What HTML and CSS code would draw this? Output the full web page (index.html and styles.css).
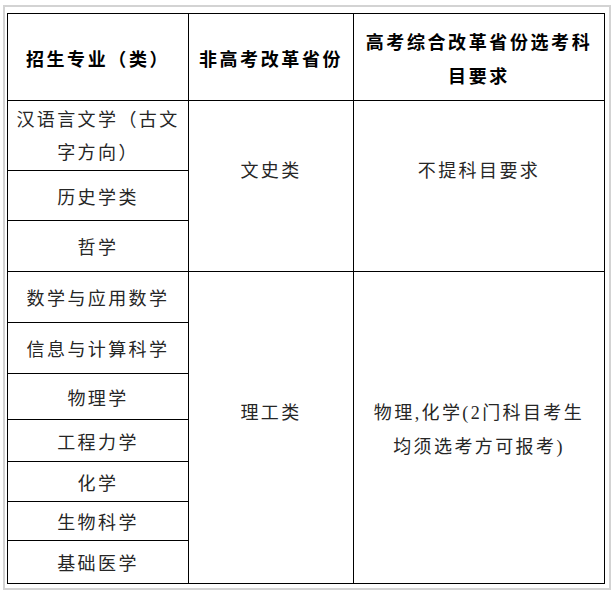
FILE: index.html
```html
<!DOCTYPE html>
<html lang="zh-CN">
<head>
<meta charset="utf-8">
<title>招生专业选考科目要求</title>
<link rel="stylesheet" href="styles.css">
</head>
<body>
<div class="frame">
  <table class="req-table">
    <colgroup>
      <col class="c1">
      <col class="c2">
      <col class="c3">
    </colgroup>
    <tr class="h87">
      <th>招生专业（类）</th>
      <th>非高考改革省份</th>
      <th>高考综合改革省份选考科目要求</th>
    </tr>
    <tr class="h70">
      <td class="two-line">汉语言文学（古文字方向）</td>
      <td rowspan="3" class="gap">文史类</td>
      <td rowspan="3" class="gap">不提科目要求</td>
    </tr>
    <tr class="h50"><td>历史学类</td></tr>
    <tr class="h51"><td>哲学</td></tr>
    <tr class="h51">
      <td>数学与应用数学</td>
      <td rowspan="7" class="gap">理工类</td>
      <td rowspan="7">物理,化学(2门科目考生<br>均须选考方可报考)</td>
    </tr>
    <tr class="h51"><td>信息与计算科学</td></tr>
    <tr class="h46"><td>物理学</td></tr>
    <tr class="h42"><td>工程力学</td></tr>
    <tr class="h40"><td>化学</td></tr>
    <tr class="h39"><td>生物科学</td></tr>
    <tr class="h43"><td>基础医学</td></tr>
  </table>
</div>
</body>
</html>
```

FILE: styles.css
```css
html, body {
  margin: 0;
  padding: 0;
  background: #ffffff;
}

body {
  font-family: "Liberation Serif", "Noto Sans CJK SC", serif;
  color: #262626;
}

.frame {
  width: 597px;
  margin: 5px 0 0 3px;
  padding: 6px 5px 4px 2px;
  border: 2px solid #d3d3d3;
}

.req-table {
  width: 597px;
  table-layout: fixed;
  border-collapse: collapse;
  border: 1px solid #000;
}

.c1 { width: 181px; }
.c2 { width: 165px; }
.c3 { width: 251px; }

.req-table th,
.req-table td {
  border: 1px solid #000;
  padding: 4px 6px 0;
  text-align: center;
  vertical-align: middle;
  font-size: 18px;
  line-height: 34px;
  letter-spacing: 2.4px;
  font-weight: 400;
}

.req-table th {
  font-weight: 700;
  color: #000;
  padding-top: 6px;
  letter-spacing: 2.6px;
}

.req-table td.two-line {
  padding-top: 3px;
  line-height: 33px;
}

.req-table td.gap {
  padding-bottom: 34px;
}

.h87 { height: 87px; }
.h70 { height: 70px; }
.h50 { height: 50px; }
.h51 { height: 51px; }
.h46 { height: 46px; }
.h42 { height: 42px; }
.h40 { height: 40px; }
.h39 { height: 39px; }
.h43 { height: 43px; }
```
